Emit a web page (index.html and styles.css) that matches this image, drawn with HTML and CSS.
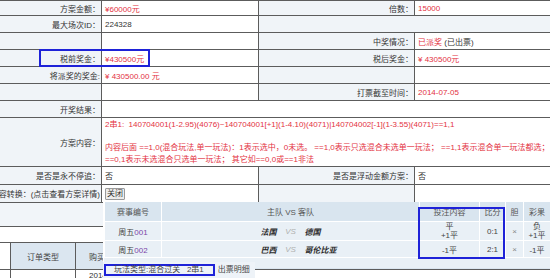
FILE: index.html
```html
<!DOCTYPE html>
<html lang="zh-CN">
<head>
  <meta charset="UTF-8" />
  <title>方案详情</title>
  <link rel="stylesheet" href="styles.css">
</head>
<body>

  <div class="page">

    <table class="info">
      <colgroup>
        <col class="c1"><col class="c2"><col class="c3"><col class="c4">
      </colgroup>
      <tr class="first">
        <td class="lbl">方案金额：</td><td class="val red">¥60000元</td>
        <td class="lbl">倍数：</td><td class="val red">15000</td>
      </tr>
      <tr>
        <td class="lbl">最大场次ID：</td><td class="val">224328</td>
        <td class="lbl" colspan="2"></td>
      </tr>
      <tr>
        <td class="lbl"></td><td class="val"></td>
        <td class="lbl">中奖情况：</td><td class="val"><span class="red">已派奖</span> (已出票)</td>
      </tr>
      <tr>
        <td class="lbl">税前奖金：</td><td class="val red">¥430500元</td>
        <td class="lbl">税后奖金：</td><td class="val red">¥ 430500元</td>
      </tr>
      <tr>
        <td class="lbl">将派奖的奖金:</td><td class="val red">¥ 430500.00 元</td>
        <td class="lbl"></td><td class="val"></td>
      </tr>
      <tr>
        <td class="lbl"></td><td class="val"></td>
        <td class="lbl">打票截至时间：</td><td class="val red">2014-07-05</td>
      </tr>
      <tr>
        <td class="lbl">开奖结果：</td><td class="val" colspan="3"></td>
      </tr>
      <tr class="tall">
        <td class="lbl">方案内容：</td>
        <td class="val red content" colspan="3">
          <p class="gap">2串1:&nbsp; 140704001(1-2.95)(4076)~140704001[+1](1-4.10)(4071)|140704002[-1](1-3.55)(4071)==1,1</p>
          <p>内容后面 ==1,0(混合玩法,单一玩法)：1表示选中，0未选。 ==1,0表示只选混合未选单一玩法； ==1,1表示混合单一玩法都选；</p>
          <p>==0,1表示未选混合只选单一玩法； 其它如==0,0或==1非法</p>
        </td>
      </tr>
      <tr class="mid">
        <td class="lbl">是否是永不停追：</td><td class="val">否</td>
        <td class="lbl">是否是浮动金额方案：</td><td class="val">否</td>
      </tr>
      <tr class="mid">
        <td class="lbl">内容转换：(点击查看方案详情)</td><td class="val"><button class="btn">关闭</button></td>
        <td class="lbl"></td><td class="val"></td>
      </tr>
    </table>

    <div class="strip"></div>
    <div class="strip blank"></div>

    <table class="orders">
      <colgroup>
        <col class="o1"><col class="o2"><col class="o3"><col class="o4">
      </colgroup>
      <tr class="ohead">
        <td class="edge"></td><td class="oth">订单类型</td><td class="oth clip">购买时间</td><td class="oth"></td>
      </tr>
      <tr>
        <td class="edge"></td><td></td><td class="clip otime">2014-07-04</td><td></td>
      </tr>
    </table>

    <!-- 弹出的对阵明细 -->
    <div class="popup">
      <table class="match">
        <colgroup>
          <col class="m1"><col class="m2"><col class="m3"><col class="m4"><col class="m5"><col class="m6">
        </colgroup>
        <tr class="mhead">
          <th>赛事编号</th><th>主队 VS 客队</th><th>投注内容</th><th>比分</th><th>胆</th><th>彩果</th>
        </tr>
        <tr class="row1">
          <td>周五<span class="num">001</span></td>
          <td><div class="teams"><b>法国</b><i>VS</i><b>德国</b></div></td>
          <td class="two">平<br>+1平</td><td>0:1</td><td class="x">×</td><td class="two">负<br>+1平</td>
        </tr>
        <tr class="row2">
          <td>周五<span class="num">002</span></td>
          <td><div class="teams"><b>巴西</b><i>VS</i><b>哥伦比亚</b></div></td>
          <td>-1平</td><td>2:1</td><td class="x">×</td><td>-1平</td>
        </tr>
      </table>
    </div>

    <div class="popup-foot">
      <span class="type">玩法类型:混合过关&nbsp;&nbsp; 2串1</span>
      <span class="detail">出票明细</span>
    </div>

    <!-- 标注框 -->
    <div class="mark mark-prize"></div>
    <div class="mark mark-bet"></div>

  </div>

</body>
</html>
```

FILE: styles.css
```css
body {
  margin: 0;
  font-family: "Liberation Sans", "Noto Sans CJK SC", sans-serif;
  font-size: 8px;
  color: #333;
  background: #fff;
  overflow: hidden;
}

.page {
  position: relative;
  width: 550px;
  height: 278px;
  overflow: hidden;
}

.red {
  color: #e3323f;
}

/* 方案信息表 */
.info {
  width: 590px;
  margin-left: -20px;
  border-collapse: collapse;
  table-layout: fixed;
}

.info .c1 { width: 121px; }
.info .c2 { width: 157px; }
.info .c3 { width: 156px; }
.info .c4 { width: 156px; }

.info td {
  border: 1px solid #5c5c5c;
  height: 16px;
  padding: 0;
  white-space: nowrap;
  vertical-align: middle;
}

.info tr.first td { height: 14px; }
.info tr.tall td { height: 48px; }
.info tr.mid td { height: 17px; }

.lbl {
  background: #f0f4f8;
  text-align: right;
  padding-right: 1px !important;
}

.val {
  background: #fff;
  padding-left: 3px !important;
}

.content p {
  margin: 0;
  line-height: 11.5px;
}

.content p.gap {
  margin-bottom: 11.5px;
}

.btn {
  font-family: inherit;
  font-size: 8px;
  color: #333;
  background: #ececec;
  border: 1px solid #9a9a9a;
  border-radius: 1px;
  padding: 0 1px;
  height: 12px;
  line-height: 10px;
  margin: 0;
  vertical-align: middle;
}

/* 下方订单表 */
.strip {
  height: 23px;
  margin-left: -20px;
  width: 590px;
  background: #f1f5f9;
  border-bottom: 1px solid #5c5c5c;
}

.strip.blank {
  height: 15px;
  background: #fff;
}

.orders {
  width: 590px;
  margin-left: -20px;
  border-collapse: collapse;
  table-layout: fixed;
}

.orders .o1 { width: 30px; }
.orders .o2 { width: 65px; }
.orders .o3 { width: 28px; }
.orders .o4 { width: 467px; }

.orders td {
  border: 1px solid #5c5c5c;
  border-top: none;
  height: 15px;
  padding: 0;
  white-space: nowrap;
}

.orders .ohead td {
  height: 26px;
}

.orders .oth {
  background: #dbe6f0;
  text-align: center;
  color: #444;
}

.orders .clip {
  overflow: hidden;
  text-align: left;
  padding-left: 13px;
}

.orders .edge {
  background: #fff;
}

.orders .otime {
  vertical-align: top;
  padding-top: 1px;
}

/* 对阵弹层 */
.popup {
  position: absolute;
  left: 103px;
  top: 202px;
  width: 446px;
  height: 66px;
  background: #e9f0f6;
  border-left: 1px solid #fff;
}

.match {
  width: 100%;
  border-collapse: collapse;
  table-layout: fixed;
}

.match .m1 { width: 57px; }
.match .m2 { width: 258px; }
.match .m3 { width: 60px; }
.match .m4 { width: 26px; }
.match .m5 { width: 18px; }
.match .m6 { width: 27px; }

.match th,
.match td {
  border: 1px solid #fff;
  border-top: none;
  padding: 0;
  text-align: center;
  white-space: nowrap;
  font-weight: normal;
  color: #444;
}

.match th {
  height: 19px;
  background: #d9e5ef;
  color: #555;
}

.match td {
  background: #e9f0f6;
}

.match .row1 td { height: 18px; }
.match .row2 td { height: 16px; }

.match td.two {
  line-height: 9px;
}

.match .num {
  color: #7a46a8;
}

.match .x {
  color: #888;
}

.teams {
  display: flex;
  align-items: center;
}

.teams b {
  flex: 1;
  font-weight: bold;
  font-style: italic;
  color: #2a2a2a;
  text-align: left;
}

.teams b:first-child {
  text-align: right;
}

.teams i {
  width: 28px;
  color: #b0b0b0;
  text-align: center;
}

.popup-foot {
  position: absolute;
  left: 103px;
  top: 262px;
  width: 152px;
  height: 16px;
  background: #eef3f8;
  display: flex;
  align-items: flex-start;
  gap: 3px;
  padding-top: 2px;
  box-sizing: border-box;
}

.popup-foot .type {
  border: 2px solid #1e22d8;
  height: 8px;
  line-height: 8px;
  padding: 0 9px 0 8px;
  margin-left: 1px;
  color: #444;
}

.popup-foot .detail {
  line-height: 12px;
  color: #444;
}

/* 蓝色标注框 */
.mark {
  position: absolute;
  border: 2px solid #1e22d8;
  box-sizing: border-box;
}

.mark-prize {
  left: 39px;
  top: 49px;
  width: 111px;
  height: 18px;
}

.mark-bet {
  left: 418px;
  top: 207px;
  width: 87px;
  height: 52px;
}
```
